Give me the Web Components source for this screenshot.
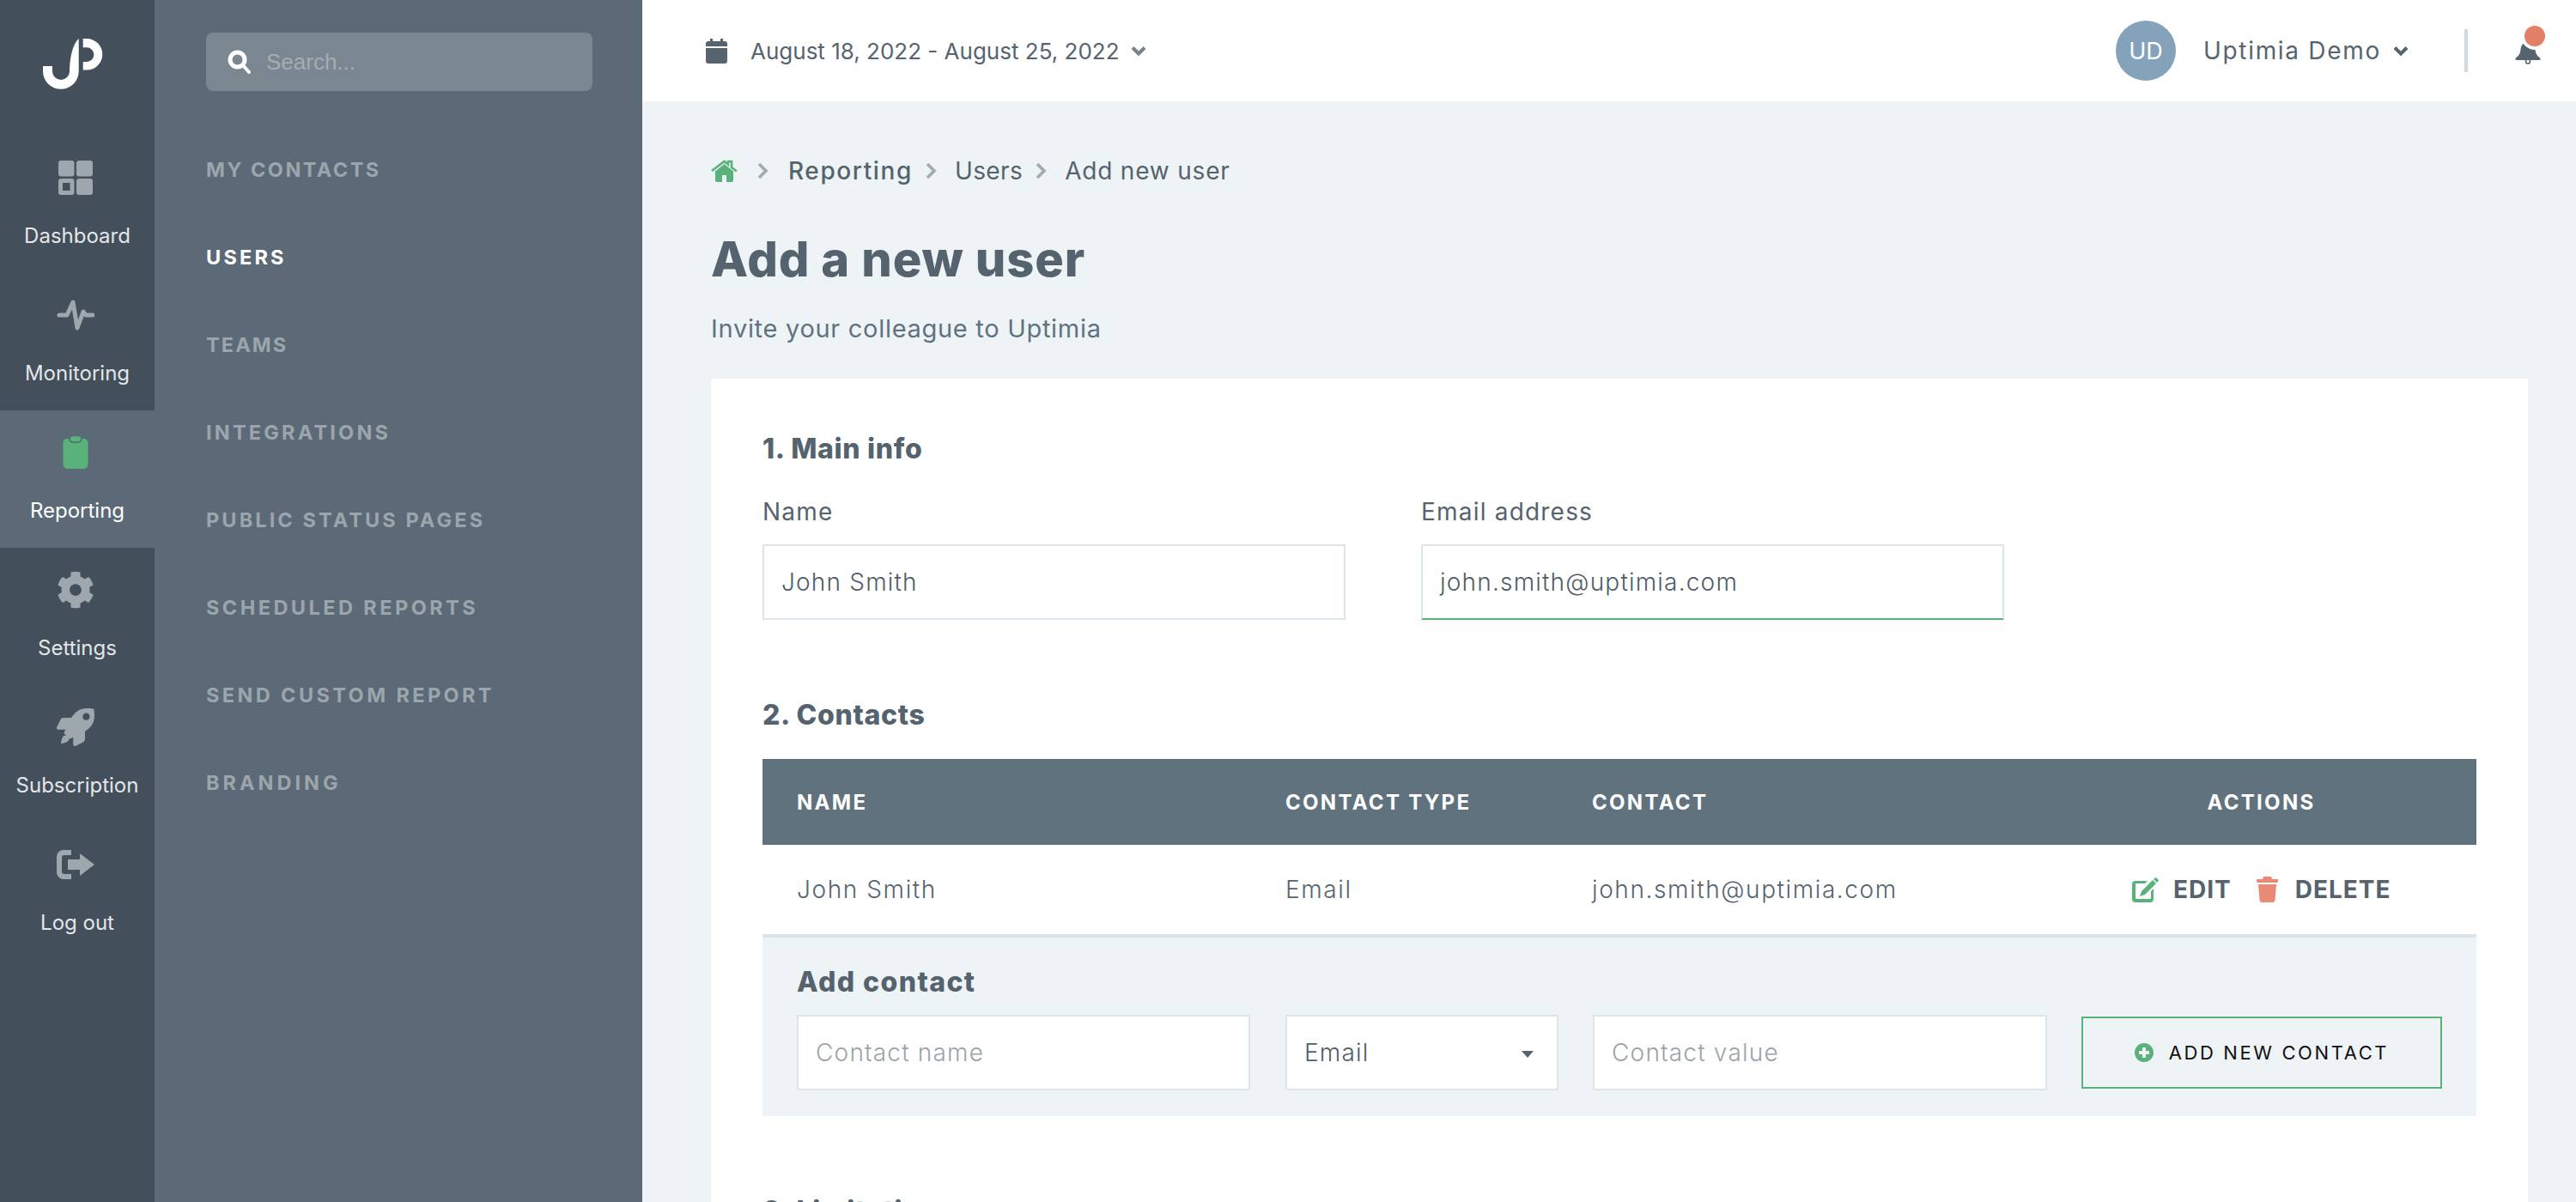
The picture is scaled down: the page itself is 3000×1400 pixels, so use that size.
<!DOCTYPE html>
<html>
<head>
<meta charset="utf-8">
<style>
  html, body { margin: 0; height: 100%; overflow: hidden; }
  body { font-family: Inter, "Liberation Sans", sans-serif; background: #eef3f6; }
</style>
</head>
<body>
<app-shell>
  <rail-nav slot="rail"></rail-nav>
  <side-menu slot="menu"></side-menu>
  <top-bar slot="top"></top-bar>
  <add-user-page></add-user-page>
</app-shell>

<script>
(function(){
  const ICONS = {
    dash: '<svg viewBox="0 0 40 40" width="40" height="40"><rect x="0" y="0" width="18.500" height="18.500" rx="3"/><rect x="21" y="0" width="19" height="18.500" rx="3"/><path fill-rule="evenodd" d="M3 21h12.500a3 3 0 0 1 3 3v13a3 3 0 0 1-3 3H3a3 3 0 0 1-3-3V24a3 3 0 0 1 3-3zM5 26v9h8.500v-9z"/><rect x="21" y="21" width="19" height="19" rx="3"/></svg>',
    pulse: '<svg viewBox="0 0 44 36" width="44" height="36"><path d="M3 18h9L19 3l5 30 7-19 3 4h8" fill="none" stroke="currentColor" stroke-width="5" stroke-linecap="round" stroke-linejoin="round"/></svg>',
    clip: '<svg viewBox="0 0 30 38" width="30" height="38"><rect x="0.500" y="3" width="29" height="35" rx="5"/><rect x="8" y="-0.500" width="14" height="7.500" rx="3.700" stroke="#4e6b6a" stroke-width="1.600"/></svg>',
    gear: '<svg viewBox="0 0 512 512" width="44" height="44"><path d="M487.4 315.7l-42.6-24.6c4.3-23.2 4.3-47 0-70.2l42.6-24.6c4.9-2.8 7.1-8.6 5.5-14-11.1-35.6-30-67.8-54.7-94.6-3.8-4.1-10-5.1-14.8-2.3L380.8 110c-17.9-15.4-38.5-27.3-60.8-35.1V25.8c0-5.6-3.9-10.5-9.4-11.7-36.7-8.2-74.3-7.8-109.2 0-5.5 1.2-9.4 6.1-9.4 11.7V75c-22.2 7.9-42.8 19.8-60.8 35.1L88.7 85.5c-4.9-2.8-11-1.9-14.8 2.3-24.7 26.7-43.6 58.9-54.7 94.6-1.7 5.4.6 11.2 5.5 14L67.3 221c-4.3 23.2-4.3 47 0 70.2l-42.6 24.6c-4.9 2.8-7.1 8.6-5.5 14 11.1 35.6 30 67.8 54.7 94.6 3.8 4.1 10 5.1 14.8 2.3l42.6-24.6c17.9 15.4 38.5 27.3 60.8 35.1v49.2c0 5.6 3.9 10.5 9.4 11.7 36.7 8.2 74.3 7.8 109.2 0 5.5-1.2 9.4-6.1 9.4-11.7v-49.2c22.2-7.9 42.8-19.8 60.8-35.1l42.6 24.6c4.9 2.8 11 1.9 14.8-2.3 24.7-26.7 43.6-58.9 54.7-94.6 1.5-5.5-.7-11.3-5.6-14.1zM256 336c-44.1 0-80-35.9-80-80s35.9-80 80-80 80 35.9 80 80-35.9 80-80 80z"/></svg>',
    rocket: '<svg viewBox="0 0 512 512" width="44" height="44"><path d="M505.1 19.1C503.8 13 499 8.2 492.9 6.9 460.7 0 435.5 0 410.4 0 307.2 0 245.3 55.2 199.1 128H94.9c-18.2 0-34.8 10.3-42.9 26.5L2.6 253.3c-8 16 3.6 34.7 21.5 34.7h95.1c-5.9 12.8-11.9 25.5-18 37.7-3.1 6.2-1.9 13.6 3 18.5l63.6 63.6c4.9 4.9 12.3 6.1 18.5 3 12.2-6.1 24.9-12 37.7-17.9V488c0 17.8 18.8 29.4 34.7 21.5l98.7-49.4c16.3-8.1 26.5-24.8 26.5-42.9V312.8c72.6-46.3 128-108.4 128-211.1.1-25.2.1-50.4-6.8-82.6zM400 160c-26.5 0-48-21.5-48-48s21.5-48 48-48 48 21.5 48 48-21.5 48-48 48zM89.4 379.5c-18.8 18.8-28.6 65.2-32.1 87.4-.9 5.6 3.9 10.4 9.5 9.5 22.2-3.5 68.6-13.3 87.4-32.1 14.6-14.6 17.7-35.6 6.9-46.4l-25.3-25.3c-10.8-10.8-31.8-7.7-46.4 6.9z"/></svg>',
    logout: '<svg viewBox="0 0 44 34" width="44" height="34"><path d="M17 0v6H9a3 3 0 0 0-3 3v16a3 3 0 0 0 3 3h8v6H8a8 8 0 0 1-8-8V8a8 8 0 0 1 8-8z"/><path d="M27 4l17 13-17 13v-7H13V11h14z"/></svg>',
    search: '<svg viewBox="0 0 27 28" width="27" height="28"><circle cx="11.500" cy="11.500" r="8.500" fill="none" stroke="currentColor" stroke-width="5"/><path d="M18 18l7 8" stroke="currentColor" stroke-width="4" stroke-linecap="round"/></svg>',
    cal: '<svg viewBox="0 0 25 29" width="25" height="29"><path d="M5 0h3v4H5zM17 0h3v4h-3z"/><path d="M3 3h19a3 3 0 0 1 3 3v3H0V6a3 3 0 0 1 3-3zM0 11h25v15a3 3 0 0 1-3 3H3a3 3 0 0 1-3-3z"/></svg>',
    chev: '<svg viewBox="0 0 18 12" width="18" height="12"><path d="M2 2.500l7 7 7-7" fill="none" stroke="currentColor" stroke-width="4"/></svg>',
    crumb: '<svg viewBox="0 0 13 20" width="13" height="20"><path d="M2 2l8 8-8 8" fill="none" stroke="currentColor" stroke-width="3.600"/></svg>',
    home: '<svg viewBox="0 0 31 26" width="31" height="26"><path d="M15.500 5L5 13.500V24a2 2 0 0 0 2 2h6v-8h5v8h6a2 2 0 0 0 2-2V13.500z"/><path d="M1 13L15.500 2 20 5.500V2h4v7l6 4.500" fill="none" stroke="currentColor" stroke-width="2.600"/></svg>',
    bell: '<svg viewBox="0 0 30 26" width="30" height="26"><path d="M15 0C9 0 7 4 6.500 9 6 14 4 16 1 18.500c-1.500 1.500-.5 2.500 1 2.500h26c1.500 0 2.500-1 1-2.500-3-2.500-5-4.500-5.500-9.500C23 4 21 0 15 0z"/><circle cx="15" cy="22.500" r="2.500" fill="none" stroke="currentColor" stroke-width="1.500"/></svg>',
    edit: '<svg viewBox="0 0 31 29" width="31" height="29"><path d="M3 4h15l-3 3H5a1 1 0 0 0-1 1v16a1 1 0 0 0 1 1h16a1 1 0 0 0 1-1v-8l3-3v12a4 4 0 0 1-4 4H4a4 4 0 0 1-4-4V8a4 4 0 0 1 4-4z"/><path d="M24 3l4 4-13 13-6 2 2-6zM26 1a2 2 0 0 1 3 0l1 1a2 2 0 0 1 0 3l-1 1-4-4z"/></svg>',
    trash: '<svg viewBox="0 0 25 30" width="25" height="30"><path d="M8 0h9l1 3h6a1 1 0 0 1 1 1v2a1 1 0 0 1-1 1H1a1 1 0 0 1-1-1V4a1 1 0 0 1 1-1h6zM2 9h21l-1.500 18a3 3 0 0 1-3 3h-12a3 3 0 0 1-3-3z"/></svg>',
    plus: '<svg viewBox="0 0 22 24" width="22" height="24"><path fill-rule="evenodd" d="M11 1a11 11 0 1 1 0 22 11 11 0 0 1 0-22zM9 6v4H5v4h4v4h4v-4h4v-4h-4V6z"/></svg>'
  };

  window.customElements.define('app-shell', class extends HTMLElement {
    constructor() {
      super();
      this.attachShadow({mode: 'open'});
      this.shadowRoot.innerHTML = `
        <style>
          :host{ display: flex; width: 100%; height: 1400px; overflow: hidden; }
          .main{ flex: 1; min-width: 0; display: flex; flex-direction: column; }
        </style>
        <slot name="rail"></slot>
        <slot name="menu"></slot>
        <div class="main">
          <slot name="top"></slot>
          <slot></slot>
        </div>
      `;
    }
  });

  window.customElements.define('rail-item', class extends HTMLElement {
    constructor() {
      super();
      this.attachShadow({mode: 'open'});
      this.shadowRoot.innerHTML = `
        <style>
          :host{ display: flex; flex-direction: column; align-items: center; height: 160px; color: #e3e6e8; }
          :host([active]){ background: #5b6a76; color: #fff; }
          .ic{ height: 50px; width: 100%; margin-top: 24px; display: flex; align-items: center; justify-content: center; padding-right: 4px; box-sizing: border-box; color: #9ea7ad; fill: currentColor; }
          :host([active]) .ic{ color: #58b27a; }
          .lb{ margin-top: 24px; font-size: 24px; line-height: 38px; }
        </style>
        <div class="ic"><slot name="icon"></slot></div>
        <div class="lb"><slot></slot></div>
      `;
    }
  });

  window.customElements.define('rail-nav', class extends HTMLElement {
    constructor() {
      super();
      this.attachShadow({mode: 'open'});
      const items = [['dash','Dashboard'],['pulse','Monitoring'],['clip','Reporting',1],['gear','Settings'],['rocket','Subscription'],['logout','Log out']];
      this.shadowRoot.innerHTML = `
        <style>
          :host{ display: block; width: 180px; flex: none; background: #434f5b; height: 100%; }
          .logo{ height: 158px; display: flex; justify-content: flex-start; box-sizing: border-box; padding: 44px 0 0 50px; }
          .logo svg{ display: block; }
        </style>
        <div class="logo">
          <svg viewBox="0 0 70 60" width="70" height="60" fill="#fff"><path d="M0 33H11V39A10 10 0 0 0 31 39C31 25 34 8 41.700 1V39A20.850 20.850 0 0 1 0 39z"/><path d="M46.700 1H51A18.300 18.300 0 0 1 51 37.600H46.700V28H51A8.400 8.400 0 0 0 51 11.200H46.700z"/></svg>
        </div>
        ${items.map(i => `<rail-item ${i[2] ? 'active' : ''}><span slot="icon" style="display:flex">${ICONS[i[0]]}</span>${i[1]}</rail-item>`).join('')}
      `;
    }
  });

  window.customElements.define('side-menu', class extends HTMLElement {
    constructor() {
      super();
      this.attachShadow({mode: 'open'});
      // letter-spacing per link, Inter is narrower than the original face
      const links = [['MY CONTACTS',2.45],['USERS',3.2],['TEAMS',2.1],['INTEGRATIONS',3.2],['PUBLIC STATUS PAGES',3.1],['SCHEDULED REPORTS',3.45],['SEND CUSTOM REPORT',3.4],['BRANDING',4]];
      this.shadowRoot.innerHTML = `
        <style>
          :host{ display: block; width: 568px; flex: none; background: #5b6a76; height: 100%; box-sizing: border-box; padding: 38px 58px 0 60px; }
          .search{ height: 68px; border-radius: 8px; background: #7a8790; display: flex; align-items: center; padding-left: 25px; gap: 18px; color: #fff; }
          .search svg{ display: block; }
          .search span{ font: 26px "Liberation Sans", sans-serif; color: #a4adb3; }
          ul{ list-style: none; margin: 41px 0 0; padding: 0; display: flex; flex-direction: column; }
          li{ height: 102px; line-height: 102px; font-size: 23.5px; font-weight: 700; color: #9ca5ac; }
          li.on{ color: #fff; }
        </style>
        <div class="search">${ICONS.search}<span>Search...</span></div>
        <ul>${links.map((l, i) => `<li class="${i == 1 ? 'on' : ''}" style="letter-spacing:${l[1]}px">${l[0]}</li>`).join('')}</ul>
      `;
    }
  });

  window.customElements.define('top-bar', class extends HTMLElement {
    constructor() {
      super();
      this.attachShadow({mode: 'open'});
      this.shadowRoot.innerHTML = `
        <style>
          :host{ display: flex; align-items: center; height: 118px; flex: none; background: #fff; color: #56646f; box-sizing: border-box; padding: 0 36px 0 74px; font-size: 26px; }
          svg{ display: block; fill: currentColor; }
          .date{ display: flex; align-items: center; gap: 27px; }
          .date .chev{ margin-left: -14px; color: #75838d; }
          .right{ margin-left: auto; display: flex; align-items: center; }
          .av{ width: 70px; height: 70px; border-radius: 50%; background: #84a2b9; color: #fff; display: flex; align-items: center; justify-content: center; font-size: 27px; }
          .name{ margin-left: 32px; font-size: 28px; letter-spacing: 1.7px; }
          .right .chev{ margin-left: 14px; }
          .sep{ width: 4px; height: 50px; background: #d0d9e1; margin: 0 55px 0 65px; }
          .bell{ position: relative; width: 35px; height: 26px; margin-top: 6px; }
          .dot{ position: absolute; left: 11px; top: -19px; width: 24px; height: 24px; border-radius: 50%; background: #e47f68; box-shadow: 0 0 0 4px #fff; }
        </style>
        <div class="date">${ICONS.cal}<span>August 18, 2022 - August 25, 2022</span><span class="chev">${ICONS.chev}</span></div>
        <div class="right">
          <div class="av">UD</div>
          <span class="name">Uptimia Demo</span>
          <span class="chev">${ICONS.chev}</span>
          <div class="sep"></div>
          <div class="bell">${ICONS.bell}<span class="dot"></span></div>
        </div>
      `;
    }
  });

  window.customElements.define('field-box', class extends HTMLElement {
    constructor() {
      super();
      this.attachShadow({mode: 'open'});
      this.shadowRoot.innerHTML = `
        <style>
          :host{ display: flex; align-items: center; box-sizing: border-box; height: 88px; background: #fff; border: 2px solid #dde4ea; padding: 0 20px; font-size: 28px; font-weight: 300; letter-spacing: 1.2px; color: #4f5d68; }
          :host([focus]){ border-bottom-color: #58b27a; }
          :host([placeholder]){ color: #9aa3a9; }
        </style>
        <slot></slot>
      `;
    }
  });

  window.customElements.define('add-user-page', class extends HTMLElement {
    constructor() {
      super();
      this.attachShadow({mode: 'open'});
      this.shadowRoot.innerHTML = `
        <style>
          :host{ display: block; flex: 1; box-sizing: border-box; padding: 0 56px 0 80px; color: #55636e; overflow: hidden; }
          svg{ display: block; fill: currentColor; }
          .crumbs{ display: flex; align-items: center; height: 30px; margin-top: 66px; font-size: 28px; letter-spacing: .8px; }
          .crumbs .g{ color: #58b27a; }
          .crumbs .s{ color: #a1aab1; margin: 0 21px 0 15px; }
          .crumbs .g + .s{ margin: 0 23px; }
          .crumbs b{ font-weight: 500; letter-spacing: 1.6px; }
          .crumbs .u{ letter-spacing: .4px; }
          h1{ margin: 56px 0 0; font-size: 56px; line-height: 64px; font-weight: 800; letter-spacing: .85px; }
          .sub{ margin-top: 29px; font-size: 29px; line-height: 40px; color: #5f7280; letter-spacing: .7px; }
          .card{ margin-top: 38px; background: #fff; padding: 62px 60px 0; height: 1000px; box-sizing: border-box; }
          h2{ margin: 0; font-size: 32px; line-height: 40px; font-weight: 800; letter-spacing: .7px; }
          .form{ display: grid; grid-template-columns: 679px 679px; column-gap: 88px; margin-top: 33px; }
          label{ display: block; font-size: 28px; line-height: 40px; margin-bottom: 18px; letter-spacing: 1.2px; }
          .c2{ margin-top: 91px; }
          .tbl{ margin-top: 31px; display: grid; grid-template-columns: 569px 357px 569px 1fr; width: 1996px; }
          .th{ background: #61727f; height: 100px; display: flex; align-items: center; color: #fff; font-size: 24px; font-weight: 700; letter-spacing: 2.3px; padding-left: 40px; }
          .th.act{ justify-content: center; padding: 0; }
          .td{ height: 104px; border-bottom: 4px solid #dde3ea; display: flex; align-items: center; padding-left: 40px; font-size: 28px; font-weight: 300; letter-spacing: 1.6px; color: #56646f; }
          .acts{ padding-left: 100px; font-weight: 700; color: #55636e; letter-spacing: 1px; }
          .acts .e{ color: #58b27a; margin-right: 17px; }
          .acts .d{ color: #e98a76; margin: 0 20px 0 29px; }
          .add{ width: 1996px; height: 208px; box-sizing: border-box; background: #eef3f6; padding: 32px 40px 0; }
          .add h3{ margin: 0; font-size: 32px; line-height: 40px; font-weight: 800; letter-spacing: 1.4px; }
          .row{ display: flex; align-items: center; margin-top: 18px; }
          .row field-box:nth-of-type(1){ width: 528px; margin-right: 41px; }
          .row field-box:nth-of-type(2){ width: 318px; margin-right: 40px; justify-content: space-between; }
          .row field-box:nth-of-type(3){ width: 529px; margin-right: 40px; }
          .tri{ width: 0; height: 0; border: 7.5px solid transparent; border-top: 8px solid #56646f; border-bottom: 0; margin-right: 7px; margin-top: 3px; }
          .btn{ width: 420px; height: 84px; box-sizing: border-box; border: 2px solid #58b27a; display: flex; align-items: center; justify-content: center; gap: 18px; color: #111; font-size: 22px; letter-spacing: 2.6px; }
          .btn svg{ color: #58b27a; }
          .c3{ margin-top: 91px; }
        </style>
        <div class="crumbs">
          <span class="g">${ICONS.home}</span><span class="s">${ICONS.crumb}</span>
          <b>Reporting</b><span class="s">${ICONS.crumb}</span>
          <span class="u">Users</span><span class="s">${ICONS.crumb}</span>
          <span>Add new user</span>
        </div>
        <h1>Add a new user</h1>
        <div class="sub">Invite your colleague to Uptimia</div>
        <div class="card">
          <h2>1. Main info</h2>
          <div class="form">
            <div><label>Name</label><field-box>John Smith</field-box></div>
            <div><label>Email address</label><field-box focus>john.smith@uptimia.com</field-box></div>
          </div>
          <h2 class="c2">2. Contacts</h2>
          <div class="tbl">
            <div class="th">NAME</div><div class="th">CONTACT TYPE</div><div class="th">CONTACT</div><div class="th act">ACTIONS</div>
            <div class="td">John Smith</div><div class="td">Email</div><div class="td">john.smith@uptimia.com</div>
            <div class="td acts"><span class="e">${ICONS.edit}</span>EDIT<span class="d">${ICONS.trash}</span>DELETE</div>
          </div>
          <div class="add">
            <h3>Add contact</h3>
            <div class="row">
              <field-box placeholder>Contact name</field-box>
              <field-box>Email<span class="tri"></span></field-box>
              <field-box placeholder>Contact value</field-box>
              <div class="btn">${ICONS.plus}ADD NEW CONTACT</div>
            </div>
          </div>
          <h2 class="c3">3. Limitations</h2>
        </div>
      `;
    }
  });
})();
</script>
</body>
</html>
